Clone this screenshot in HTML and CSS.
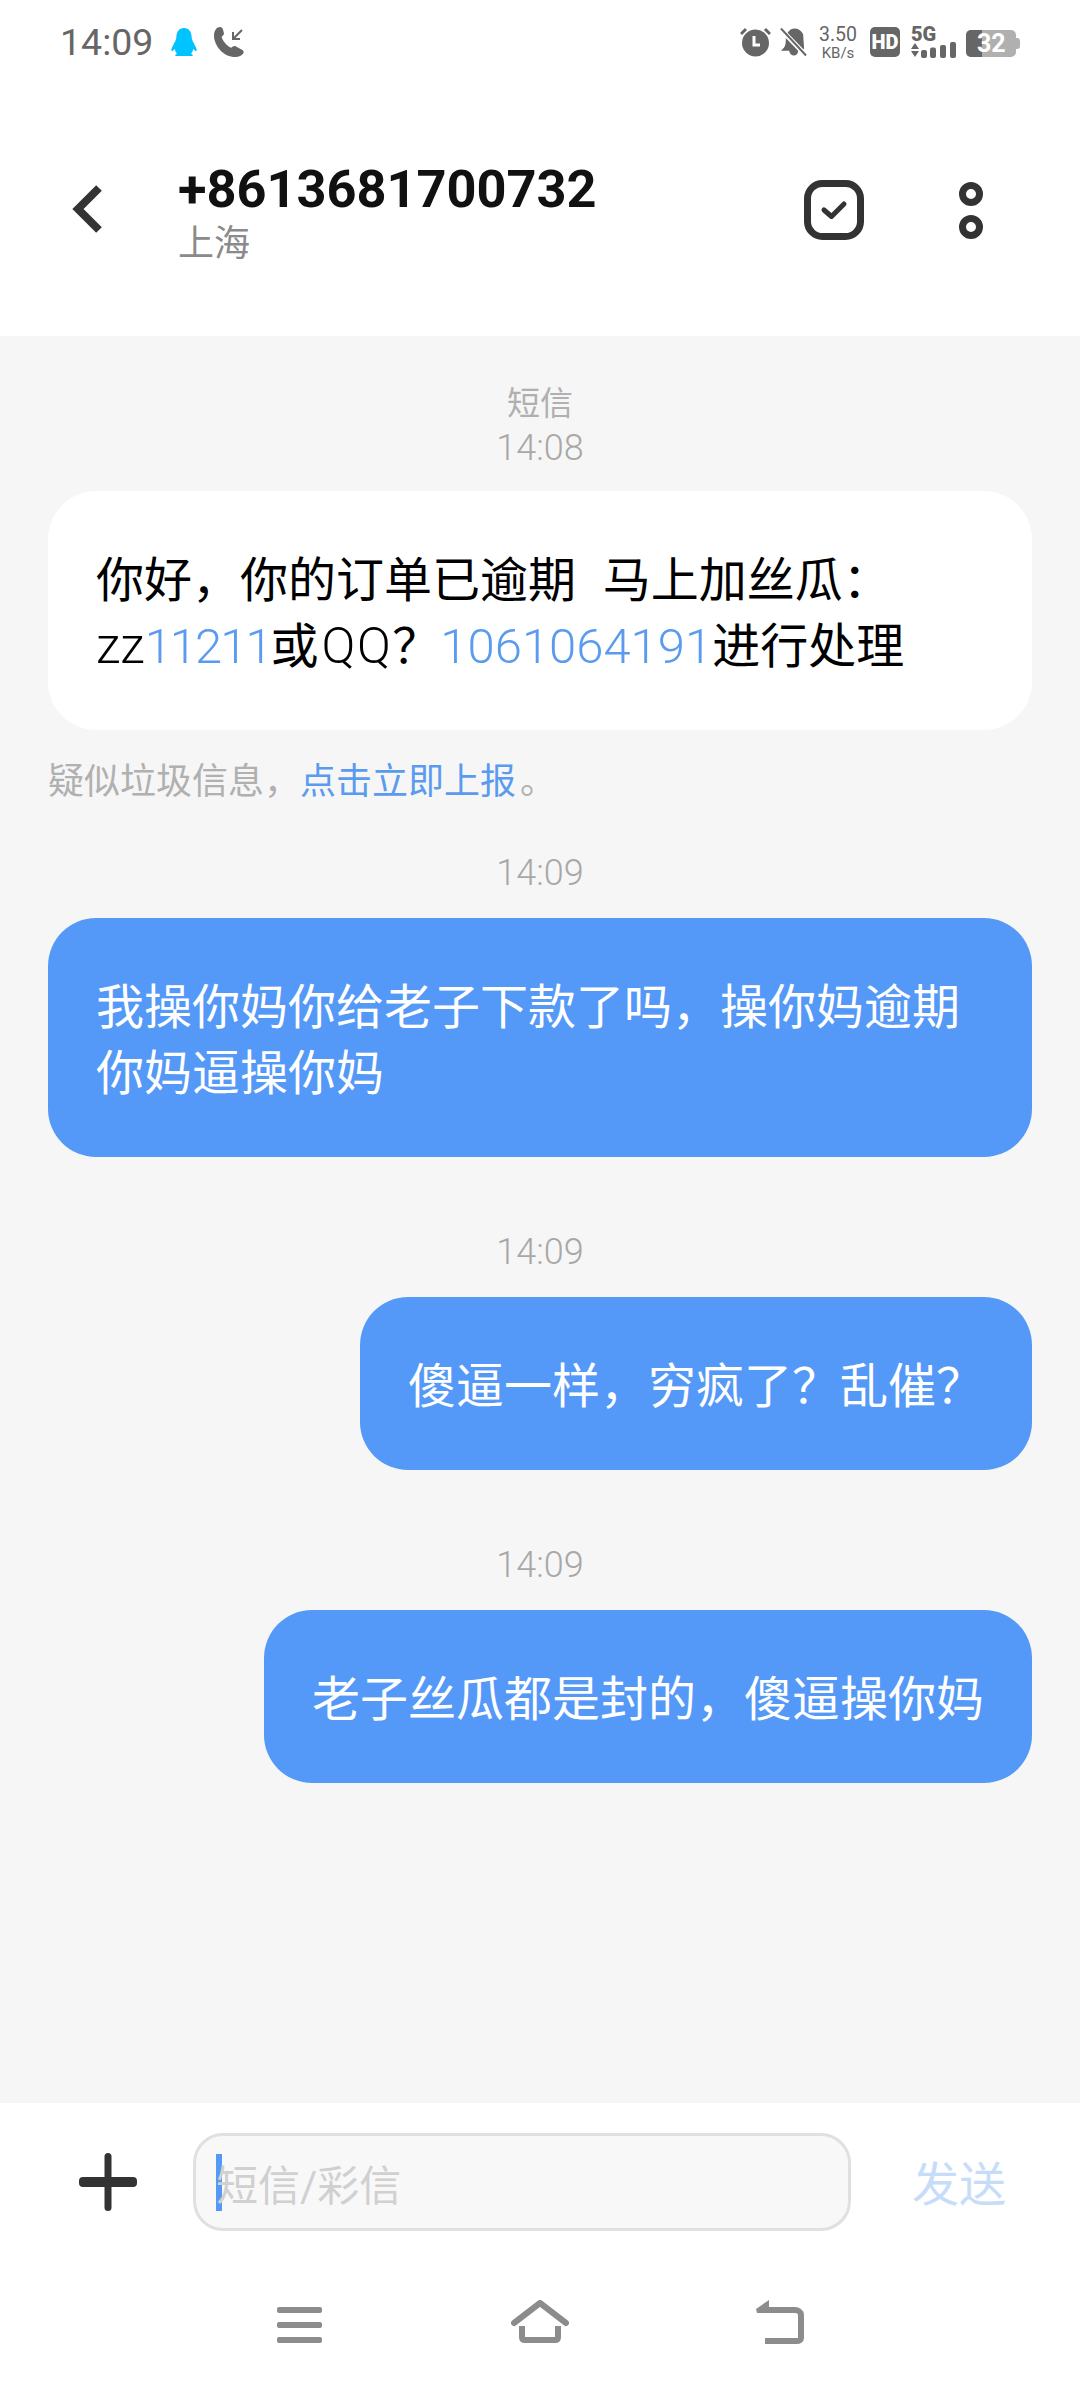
FILE: index.html
```html
<!DOCTYPE html>
<html lang="zh-CN">
<head>
    <meta charset="UTF-8">
    <meta name="viewport" content="width=device-width, initial-scale=1.0">
    <title>短信</title>
    <link rel="stylesheet" href="styles.css">
</head>
<body>
    <div class="phone">
        <!-- Status bar -->
        <div class="status-bar">
            <div class="status-left">
                <span class="clock">14:09</span>
                <svg class="qq-icon" viewBox="0 0 26 28">
                    <path fill="#00c3ff" d="M13 0C7.600 0 5.600 4.200 5.400 8.600 5.300 11 4.600 12.600 3.400 14.800 2 17.600.6 20.400 0 22.400l1.600.6 2.200-2c.3 1.800 1 3.400 2.200 4.600C5 26 4.400 26.800 4.200 28h17.600c-.2-1.200-.8-2-1.800-2.400 1.200-1.200 1.900-2.800 2.200-4.600l2.200 2 1.600-.6c-.6-2-2-4.800-3.400-7.600-1.200-2.200-1.900-3.800-2-6.200C20.400 4.200 18.400 0 13 0z"/>
                </svg>
                <svg class="call-icon" viewBox="0 0 30 30">
                    <path fill="#666" d="M6 0c1.400 0 2.400.8 2.800 2l1 3.600c.4 1.200 0 2.400-1 3.200L7.600 9.800c1 4 5 9.200 9.600 11l1.600-1.200c1-.8 2.200-.8 3.200-.2l6.400 3.600c1.200.8 1.600 2 1 3.200C28 28.600 24.800 30 21.400 30 9.600 30 0 18.800 0 8.400 0 4.400 2.200 0 6 0z"/>
                    <path fill="none" stroke="#666" stroke-width="2" d="M28 3 L19 12 M19 5v7h7"/>
                </svg>
            </div>
            <div class="status-right">
                <svg class="alarm-icon" viewBox="0 0 31 30">
                    <circle cx="15.500" cy="16" r="13.500" fill="#666"/>
                    <path fill="none" stroke="#fff" stroke-width="3" d="M14 9v9h6"/>
                    <path fill="none" stroke="#666" stroke-width="3" d="M1 7l5-5M30 7l-5-5"/>
                </svg>
                <svg class="bell-icon" viewBox="0 0 28 30">
                    <path fill="#666" d="M4 21c1.500-2 2-4 2-8 0-7 4-12 9-12 4 0 7 2 9 6l1 15-6 2c-.5 3-2 5-4.500 5S10 27 9.500 24H1z"/>
                    <path stroke="#fff" stroke-width="5" d="M1 2l26 27"/>
                    <path stroke="#666" stroke-width="2" d="M1 1l26 28"/>
                </svg>
                <div class="speed">
                    <span class="speed-num">3.50</span>
                    <span class="speed-unit">KB/s</span>
                </div>
                <div class="hd-badge">HD</div>
                <div class="signal">
                    <span class="five-g">5G</span>
                    <svg class="signal-icon" viewBox="0 0 45 16">
                        <path fill="#666" d="M0 7L4 1l4 6zM0 9h8l-4 6z"/>
                        <rect x="10" y="8" width="6" height="8" rx="2" fill="#666"/>
                        <rect x="19" y="5.500" width="6" height="10.500" rx="2" fill="#666"/>
                        <rect x="29" y="3" width="6" height="13" rx="2" fill="#666"/>
                        <rect x="39" y="0" width="6" height="16" rx="2" fill="#666"/>
                    </svg>
                </div>
                <div class="battery">
                    <div class="battery-fill"></div>
                    <span class="battery-num">32</span>
                    <div class="battery-cap"></div>
                </div>
            </div>
        </div>

        <!-- Header -->
        <div class="header">
            <svg class="back-icon" viewBox="0 0 30 48">
                <path fill="none" stroke="#333" stroke-width="8" d="M27 3L6 24l21 21"/>
            </svg>
            <div class="contact">
                <div class="contact-number">+8613681700732</div>
                <div class="contact-place">上海</div>
            </div>
            <svg class="check-icon" viewBox="0 0 60 60">
                <rect x="3.500" y="3.500" width="53" height="53" rx="15" fill="none" stroke="#333" stroke-width="7"/>
                <path fill="none" stroke="#333" stroke-width="5" stroke-linecap="round" stroke-linejoin="round" d="M20 30l7.500 6.500L40 24"/>
            </svg>
            <div class="more-icon">
                <span class="more-dot"></span>
                <span class="more-dot"></span>
            </div>
        </div>

        <!-- Messages -->
        <div class="thread">
            <div class="stamp-label">短信</div>
            <div class="stamp">14:08</div>
            <div class="bubble in">你好，你的订单已逾期<span class="wide-space">&nbsp;&nbsp;</span>马上加丝瓜：<br><span class="latin">zz</span><span class="link tight">11211</span>或<span class="latin spaced">QQ</span><span class="mark">？</span><span class="link">1061064191</span>进行处理</div>
            <div class="notice">疑似垃圾信息，<span class="notice-link">点击立即上报</span>。</div>

            <div class="stamp first">14:09</div>
            <div class="bubble out wide">我操你妈你给老子下款了吗，操你妈逾期<br>你妈逼操你妈</div>

            <div class="stamp gap">14:09</div>
            <div class="bubble out">傻逼一样，穷疯了<span class="mark">？</span>乱催<span class="mark">？</span></div>

            <div class="stamp gap">14:09</div>
            <div class="bubble out">老子丝瓜都是封的，傻逼操你妈</div>
        </div>

        <!-- Input bar -->
        <div class="composer">
            <svg class="plus-icon" viewBox="0 0 58 58">
                <rect x="25.500" y="0" width="7" height="58" rx="3.500" fill="#333"/>
                <rect x="0" y="24" width="58" height="10" rx="4" fill="#333"/>
            </svg>
            <div class="input-box">
                <span class="caret"></span>
                <span class="placeholder">短信/彩信</span>
            </div>
            <div class="send">发送</div>
        </div>

        <!-- Nav bar -->
        <div class="nav-bar">
            <svg class="nav-menu" viewBox="0 0 45 36">
                <rect y="0" width="45" height="6" rx="2" fill="#8c8c8c"/>
                <rect y="15" width="45" height="6" rx="2" fill="#8c8c8c"/>
                <rect y="30" width="45" height="6" rx="2" fill="#8c8c8c"/>
            </svg>
            <svg class="nav-home" viewBox="0 0 58 44">
                <path fill="none" stroke="#8c8c8c" stroke-width="6" stroke-linecap="round" stroke-linejoin="round" d="M3 23L29 3l26 20"/>
                <path fill="none" stroke="#8c8c8c" stroke-width="6" d="M11 26v11c0 2 1 3 3 3h30c2 0 3-1 3-3V26"/>
            </svg>
            <svg class="nav-back" viewBox="0 0 48 44">
                <path fill="#8c8c8c" d="M13 0L0 9l1 4h12z"/>
                <path fill="none" stroke="#8c8c8c" stroke-width="6" d="M6 10h33c3 0 6 2 6 5v23c0 2-2 3-4 3H9"/>
            </svg>
        </div>
    </div>
</body>
</html>
```

FILE: styles.css
```css
/* Page */
body {
    margin: 0;
    padding: 0;
    background: #fff;
    font-family: Roboto, "Noto Sans CJK SC", sans-serif;
}

.phone {
    display: flex;
    flex-direction: column;
    width: 1080px;
    height: 2388px;
    overflow: hidden;
}

/* Status bar */
.status-bar {
    display: flex;
    justify-content: space-between;
    align-items: center;
    height: 84px;
    padding: 0 64px 0 60px;
    flex-shrink: 0;
    color: #666;
}

.status-left,
.status-right {
    display: flex;
    align-items: center;
}

.clock {
    font-size: 37.500px;
    margin-right: 18px;
}

.qq-icon {
    width: 26px;
    height: 28px;
    margin-right: 17px;
}

.call-icon {
    width: 30px;
    height: 30px;
}

.alarm-icon {
    width: 31px;
    height: 30px;
    margin-right: 9px;
}

.bell-icon {
    width: 27px;
    height: 30px;
    margin-right: 12px;
}

.speed {
    display: flex;
    flex-direction: column;
    align-items: center;
    width: 38px;
    margin-right: 13px;
}

.speed-num {
    font-size: 19.500px;
    line-height: 23px;
}

.speed-unit {
    font-size: 15px;
    line-height: 15px;
}

.hd-badge {
    width: 30px;
    height: 30px;
    border-radius: 5px;
    background: #666;
    color: #fff;
    font-size: 20px;
    font-weight: 900;
    line-height: 30px;
    text-align: center;
    margin-right: 11px;
}

.signal {
    display: flex;
    flex-direction: column;
    width: 45px;
    margin-right: 10px;
}

.five-g {
    font-size: 20px;
    line-height: 15px;
    font-weight: 900;
}

.signal-icon {
    width: 45px;
    height: 16px;
}

.battery {
    position: relative;
    width: 50px;
    height: 27px;
    border-radius: 5px;
    background: #b0b0b0;
    margin-top: 3px;
}

.battery-fill {
    width: 16px;
    height: 27px;
    border-radius: 5px 0 0 5px;
    background: #666;
}

.battery-num {
    position: absolute;
    left: 11px;
    top: 0;
    color: #fff;
    font-size: 25px;
    line-height: 27px;
    font-weight: 700;
}

.battery-cap {
    position: absolute;
    right: -4px;
    top: 8px;
    width: 4px;
    height: 11px;
    border-radius: 0 3px 3px 0;
    background: #b0b0b0;
}

/* Header */
.header {
    display: flex;
    align-items: center;
    height: 252px;
    flex-shrink: 0;
    padding-left: 72px;
}

.back-icon {
    width: 30px;
    height: 48px;
    margin-bottom: 3px;
    margin-right: 76px;
}

.contact {
    width: 626px;
    margin-top: 6px;
}

.contact-number {
    font-size: 52.300px;
    line-height: 62px;
    font-weight: 700;
    color: #111;
}

.contact-place {
    font-size: 36px;
    line-height: 48px;
    color: #8a8a8a;
}

.check-icon {
    width: 60px;
    height: 60px;
    margin-right: 95px;
}

.more-icon {
    display: flex;
    flex-direction: column;
    gap: 9px;
}

.more-dot {
    width: 24px;
    height: 24px;
    box-sizing: border-box;
    border: 7px solid #333;
    border-radius: 50%;
}

/* Messages */
.thread {
    display: flex;
    flex-direction: column;
    flex: 1;
    padding: 46px 48px 0;
    background: #f6f6f6;
}

.stamp-label {
    font-size: 33px;
    line-height: 44px;
    color: #b0b0b0;
    text-align: center;
}

.stamp {
    font-size: 36px;
    font-weight: 300;
    line-height: 44px;
    color: #a8a8a8;
    text-align: center;
}

.stamp.first {
    margin-top: 44px;
}

.stamp.gap {
    margin-top: 73px;
}

.bubble {
    margin-top: 23px;
    padding: 57px 48px 50px;
    border-radius: 48px;
    font-size: 48px;
    line-height: 66px;
}

.bubble.in {
    margin-top: 21px;
    background: #fff;
    color: #000;
}

.bubble.out {
    align-self: flex-end;
    background: #5599f8;
    color: #fff;
}

.bubble.wide {
    align-self: stretch;
}

.wide-space {
    letter-spacing: 1.500px;
}

.latin {
    font-size: 50px;
    font-weight: 300;
    line-height: 0;
}

.latin.spaced {
    margin-left: 3px;
    letter-spacing: 1.500px;
}

.link {
    color: #5a9bef;
    font-size: 49px;
    font-weight: 300;
    line-height: 0;
}

/* the ones in this number are drawn narrower */
.link.tight {
    letter-spacing: -2px;
}

/* full-width question mark sits centred in its cell */
.mark {
    font-family: "Noto Sans CJK TC", sans-serif;
    line-height: 0;
}

.notice {
    margin-top: 27px;
    font-size: 36px;
    line-height: 50px;
    color: #b0b0b0;
}

.notice-link {
    color: #5a9bef;
    margin-right: 4px;
}

/* Input bar */
.composer {
    display: flex;
    align-items: center;
    height: 158px;
    padding-left: 79px;
    flex-shrink: 0;
    background: #fff;
}

.plus-icon {
    width: 58px;
    height: 58px;
    margin-right: 56px;
}

.input-box {
    display: flex;
    align-items: center;
    box-sizing: border-box;
    width: 658px;
    height: 98px;
    padding-left: 20px;
    border: 3px solid #e0e0e0;
    border-radius: 30px;
    background: #f8f8f8;
    margin-right: 61px;
}

.caret {
    width: 6px;
    height: 57px;
    background: #5599f8;
    flex-shrink: 0;
}

.placeholder {
    margin-left: -6px;
    font-size: 42px;
    color: #d0d0d0;
}

.send {
    font-size: 47px;
    color: #c6dcf8;
    margin-bottom: 4px;
}

/* Nav bar */
.nav-bar {
    display: flex;
    align-items: flex-start;
    height: 127px;
    padding: 39px 0 0 277px;
    box-sizing: border-box;
    flex-shrink: 0;
    background: #fff;
}

.nav-menu {
    width: 45px;
    height: 36px;
    margin-top: 7px;
    margin-right: 189px;
}

.nav-home {
    width: 58px;
    height: 44px;
    margin-right: 187px;
}

.nav-back {
    width: 48px;
    height: 44px;
}
```
